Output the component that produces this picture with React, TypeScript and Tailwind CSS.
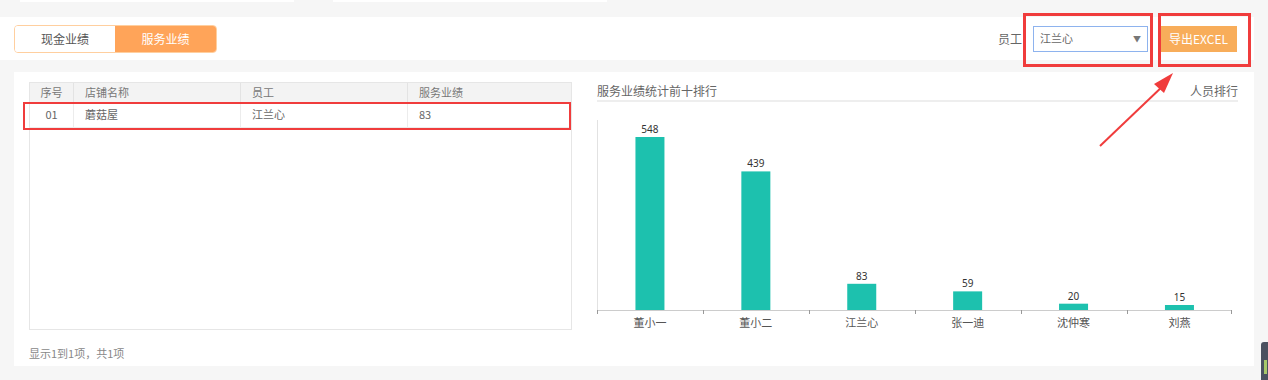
const font = "font-['Noto_Sans_CJK_SC','Noto_Sans',sans-serif]";

const rows = [{ no: "01", shop: "蘑菇屋", staff: "江兰心", amount: "83" }];

const chart = [
  { name: "董小一", value: 548 },
  { name: "董小二", value: 439 },
  { name: "江兰心", value: 83 },
  { name: "张一迪", value: 59 },
  { name: "沈仲寒", value: 20 },
  { name: "刘燕", value: 15 },
];

function Toolbar() {
  return (
    <div className="flex h-[43px] w-[1254px] items-center bg-white pl-[14px] pr-[17px]">
      <div className="flex h-[28px] overflow-hidden rounded-[4px] border border-[#ffcf9f] text-[12px]">
        <button className="w-[100px] bg-white text-[#555]">现金业绩</button>
        <button className="w-[101px] bg-[#ffa459] text-white">服务业绩</button>
      </div>
      <div className="ml-auto flex items-center">
        <span className="mr-[11px] text-[12px] text-[#666]">员工</span>
        <div className="flex h-[26px] w-[115px] items-center justify-between border border-[#8eb3ee] bg-white px-[6px] text-[11px] text-[#666]">
          <span>江兰心</span>
          <span className="text-[8px] text-[#777]">▼</span>
        </div>
        <button className="ml-[12px] h-[26px] w-[77px] bg-[#f8ad5a] text-[12px] text-white">导出EXCEL</button>
      </div>
    </div>
  );
}

function DataTable() {
  return (
    <div className="flex w-[543px] flex-col">
      <div className="h-[248px] border border-[#e6e6e6] text-[11px]">
        <div className="grid h-[19px] grid-cols-[44px_167px_167px_1fr] bg-[#f3f3f3] text-[#777]">
          <div className="flex items-center justify-center border-r border-[#e3e3e3]">序号</div>
          <div className="flex items-center border-r border-[#e3e3e3] pl-[11px]">店铺名称</div>
          <div className="flex items-center border-r border-[#e3e3e3] pl-[11px]">员工</div>
          <div className="flex items-center pl-[11px]">服务业绩</div>
        </div>
        {rows.map((r) => (
          <div
            key={r.no}
            className="grid h-[26px] grid-cols-[44px_167px_167px_1fr] border-b border-[#ececec] text-[#666]"
          >
            <div className="flex items-center justify-center border-r border-[#ececec]">{r.no}</div>
            <div className="flex items-center border-r border-[#ececec] pl-[11px]">{r.shop}</div>
            <div className="flex items-center border-r border-[#ececec] pl-[11px]">{r.staff}</div>
            <div className="flex items-center pl-[11px]">{r.amount}</div>
          </div>
        ))}
      </div>
      <div className="mt-[15px] text-[11px] text-[#888]">显示1到1项，共1项</div>
    </div>
  );
}

function BarChart() {
  const base = 208;
  const step = 105.9;
  return (
    <div className="ml-[25px] flex w-[641px] flex-col">
      <div className="flex h-[20px] items-center justify-between border-b-2 border-[#eeeeee] text-[12px] text-[#666]">
        <span>服务业绩统计前十排行</span>
        <span>人员排行</span>
      </div>
      <svg width="641" height="232" className="block">
        <line x1="0.5" y1="18" x2="0.5" y2={base} stroke="#e2e2e2" />
        <line x1="0" y1={base + 0.5} x2="635" y2={base + 0.5} stroke="#cccccc" />
        {chart.map((_, i) => (
          <line key={"t" + i} x1={Math.round(i * step) + 0.5} y1={base} x2={Math.round(i * step) + 0.5} y2={base + 4} stroke="#999" />
        ))}
        <line x1="634.5" y1={base} x2="634.5" y2={base + 4} stroke="#999" />
        {chart.map((d, i) => {
          const h = Math.max(d.value * 0.3157, 5);
          const cx = i * step + step / 2;
          return (
            <g key={d.name}>
              <rect x={cx - 14.5} y={base - h} width="29" height={h} fill="#1dc1ae" />
              <text x={cx} y={base - h - 4} textAnchor="middle" fontSize="10" fill="#333" fontFamily="Noto Sans, sans-serif">
                {d.value}
              </text>
              <text x={cx} y={base + 17} textAnchor="middle" fontSize="11" fill="#555" fontFamily="Noto Sans CJK SC, sans-serif">
                {d.name}
              </text>
            </g>
          );
        })}
      </svg>
    </div>
  );
}

export default function App() {
  return (
    <div className={`relative h-[380px] w-[1268px] overflow-hidden bg-[#f6f6f6] ${font}`}>
      <div className="flex h-[17px] items-start gap-[39px] pl-[20px]">
        <div className="h-[2px] w-[274px] bg-white" />
        <div className="h-[2px] w-[274px] bg-white" />
      </div>
      <Toolbar />
      <div className="ml-[14px] mt-[12px] flex h-[294px] w-[1240px] bg-white pl-[15px] pt-[10px]">
        <DataTable />
        <BarChart />
      </div>

      {/* annotations */}
      <div className="absolute left-[23px] top-[102px] h-[28px] w-[548px] border-2 border-[#f03c3c]" />
      <div className="absolute left-[1023px] top-[13px] h-[54px] w-[130px] border-[3px] border-[#f03c3c]" />
      <div className="absolute left-[1158px] top-[13px] h-[54px] w-[93px] border-[3px] border-[#f03c3c]" />
      <svg className="absolute left-[1095px] top-[68px]" width="90" height="85">
        <line x1="5" y1="78" x2="70" y2="16" stroke="#f03c3c" strokeWidth="2" />
        <polygon points="78,5 59,16 69,25" fill="#f03c3c" />
      </svg>
      <div className="absolute left-[1261px] top-[342px] h-[38px] w-[7px] rounded-tl-[3px] bg-[#4b5160]">
        <div className="ml-[3px] mt-[18px] h-[14px] w-[3px] bg-[#a8c86a]" />
      </div>
    </div>
  );
}
